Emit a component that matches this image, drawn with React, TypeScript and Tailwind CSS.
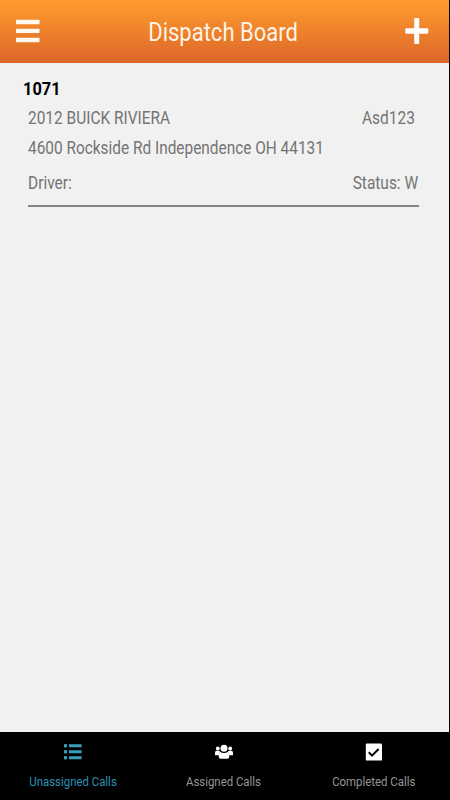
import type { ReactNode } from 'react';

const MenuIcon = () => (
  <svg width="24" height="24" viewBox="0 0 24 24" fill="#fffaf0">
    <rect x="0" y="0.8" width="23.5" height="4.4" rx="0.4" />
    <rect x="0" y="9.8" width="23.5" height="4.2" rx="0.4" />
    <rect x="0" y="18.8" width="23.5" height="4.4" rx="0.4" />
  </svg>
);

const PlusIcon = () => (
  <svg width="24" height="28" viewBox="0 0 24 28" fill="#fff">
    <rect x="9.2" y="1" width="5" height="26" rx="1" />
    <rect x="0.3" y="11.3" width="23" height="5.4" rx="1" />
  </svg>
);

const ListIcon = () => (
  <svg width="18" height="18" viewBox="0 0 18 18" fill="#369ebb">
    {[1, 7, 13].map((y) => (
      <g key={y}>
        <rect x="0" y={y} width="3" height="3.6" rx="0.8" />
        <rect x="5" y={y + 0.3} width="12.6" height="3" rx="0.3" />
      </g>
    ))}
  </svg>
);

const GroupIcon = () => (
  <svg width="20" height="18" viewBox="0 0 20 18" fill="#fff">
    <circle cx="3.8" cy="5.5" r="1.9" />
    <circle cx="16.2" cy="5.5" r="1.9" />
    <path d="M1 12.2V9.4q0-1.6 1.6-1.6h2.6q1 1.2 2 1.6-1.9.6-2.2 2.8z" />
    <path d="M19 12.2V9.4q0-1.6-1.6-1.6h-2.6q-1 1.2-2 1.6 1.9.6 2.2 2.8z" />
    <circle cx="10" cy="5.3" r="3.5" />
    <path d="M4.7 13.6q0-3.9 3.1-4.1 2.2 1 4.4 0 3.1.2 3.1 4.1 0 2.2-2 2.2H6.7q-2 0-2-2.2z" />
  </svg>
);

const CheckIcon = () => (
  <svg width="18" height="18" viewBox="0 0 18 18">
    <rect x="0.8" y="0.6" width="16.2" height="17" rx="1.2" fill="#fff" />
    <path d="M3.8 9.2 7 12.6 13.6 6" fill="none" stroke="#000" strokeWidth="2" />
  </svg>
);

type TabProps = { icon: ReactNode; label: string; className: string };

const Tab = ({ icon, label, className }: TabProps) => (
  <button className="flex w-[150px] shrink-0 flex-col items-center pt-[10px]">
    <span className="flex h-[20px] items-center">{icon}</span>
    <span className={`mt-[12px] scale-x-95 text-[12px] leading-[16px] whitespace-nowrap ${className}`}>{label}</span>
  </button>
);

export default function App() {
  return (
    <div className="h-[800px] w-[450px] overflow-hidden bg-black font-['Roboto',sans-serif]">
      <div className="flex h-[732px] w-[448.5px] flex-col bg-[#f1f1f1]">
        <header className="flex h-[62.5px] shrink-0 items-center justify-between bg-linear-to-b from-[#ff9c2e] to-[#db6629] pr-[19px] pl-[16px]">
          <button><MenuIcon /></button>
          <h1 className="ml-[1px] scale-x-[0.88] pt-[3px] text-[25px] leading-[30px] text-[#fff3e4]">Dispatch Board</h1>
          <button><PlusIcon /></button>
        </header>

        <main className="pt-[15px] pr-[30px] pl-[23px] text-[17.5px] text-[#747474]">
          <h2 className="h-[22px] origin-left scale-x-[0.91] text-[18px] leading-[22px] font-bold text-black">1071</h2>
          <div className="ml-[5px] border-b-2 border-[#858585] pb-[10px]">
            <div className="flex h-[30px] items-center justify-between pt-[7px] pr-[4px]">
              <span className="origin-left scale-x-[0.883]">2012 BUICK RIVIERA</span>
              <span className="origin-right scale-x-[0.883]">Asd123</span>
            </div>
            <div className="flex h-[30px] items-center pt-[7px]">
              <span className="origin-left scale-x-[0.88]">4600 Rockside Rd Independence OH 44131</span>
            </div>
            <div className="flex h-[35px] items-center justify-between pt-[12px]">
              <span className="origin-left scale-x-[0.883]">Driver:</span>
              <span className="origin-right scale-x-[0.883]">Status: W</span>
            </div>
          </div>
        </main>
      </div>

      <nav className="-ml-[2px] flex h-[68px] w-[452px] gap-[0.5px] bg-black">
        <Tab icon={<ListIcon />} label="Unassigned Calls" className="text-[#2b93b5]" />
        <Tab icon={<GroupIcon />} label="Assigned Calls" className="text-[#969696]" />
        <Tab icon={<CheckIcon />} label="Completed Calls" className="text-[#969696]" />
      </nav>
    </div>
  );
}
